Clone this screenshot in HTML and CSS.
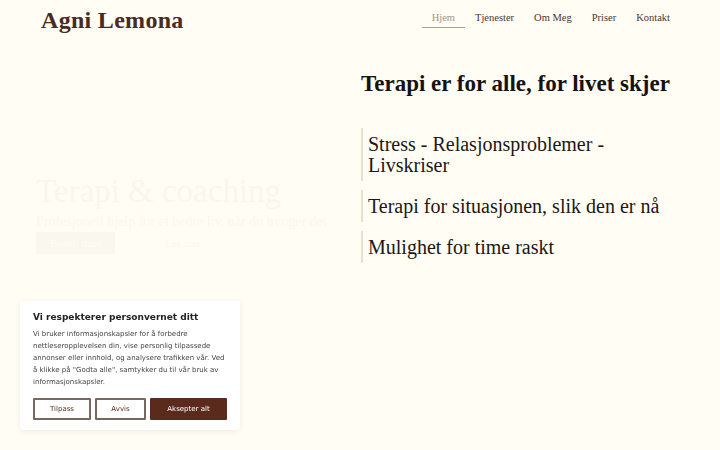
FILE: index.html
```html
<!DOCTYPE html>
<html lang="nb">
<head>
    <meta charset="utf-8">
    <title>Agni Lemona</title>
    <meta name="viewport" content="width=device-width, initial-scale=1">
    <link rel="stylesheet" href="styles.css">
</head>
<body>
    <header class="top">
        <div class="logo">Agni Lemona</div>
        <nav class="nav">
            <a class="on" href="#">Hjem</a>
            <a href="#">Tjenester</a>
            <a href="#">Om Meg</a>
            <a href="#">Priser</a>
            <a href="#">Kontakt</a>
        </nav>
    </header>

    <main class="hero">
        <section class="intro">
            <h1>Terapi &amp; coaching</h1>
            <p>Profesjonell hjelp for et bedre liv, når du trenger det</p>
            <div class="intro-b">
                <a class="fill" href="#">Bestill time</a>
                <a href="#">Les mer</a>
            </div>
        </section>

        <section class="points">
            <h2>Terapi er for alle, for livet skjer</h2>
            <ul>
                <li>Stress - Relasjonsproblemer - Livskriser</li>
                <li>Terapi for situasjonen, slik den er nå</li>
                <li>Mulighet for time raskt</li>
            </ul>
        </section>
    </main>

    <div class="cookie">
        <h3>Vi respekterer personvernet ditt</h3>
        <p>Vi bruker informasjonskapsler for å forbedre nettleseropplevelsen din, vise personlig tilpassede annonser eller innhold, og analysere trafikken vår. Ved å klikke på "Godta alle", samtykker du til vår bruk av informasjonskapsler.</p>
        <div class="cookie-b">
            <button class="ghost">Tilpass</button>
            <button class="ghost">Avvis</button>
            <button class="solid">Aksepter alt</button>
        </div>
    </div>
</body>
</html>
```

FILE: styles.css
```css
/* Farger */
:root {
    --bg: #fffdf4;
    --brun: #5a2b1d;
    --tekst: #4a3530;
    --kant: #eadfcb;
}

html, body {
    margin: 0;
    padding: 0;
    height: 100%;
    background-color: var(--bg);
    font-family: "Liberation Serif", serif;
}

/* Toppmeny */
.top {
    display: flex;
    justify-content: space-between;
    align-items: flex-start;
    padding: 0 40px 0 41px;
    height: 36px;
}

.logo {
    font-size: 24px;
    font-weight: bold;
    color: #4b2a21;
    letter-spacing: 0.3px;
    margin-top: 7px;
}

.nav {
    display: flex;
    margin-top: 12px;
}

.nav a {
    font-size: 10.5px;
    color: var(--tekst);
    text-decoration: none;
    padding: 0 10px 4px;
    border-bottom: 1px solid transparent;
}

.nav a.on {
    color: #a8937f;
    border-bottom-color: #b3a291;
}

/* Hovedinnhold */
.hero {
    display: grid;
    grid-template-columns: 325px 1fr;
    padding: 0 0 0 36px;
}

.intro {
    padding-top: 137px;
    opacity: 0.022;
}

.intro h1 {
    margin: 0;
    font-size: 33px;
    font-weight: normal;
    color: #222;
}

.intro p {
    margin: 4px 0 2px;
    font-size: 14px;
    color: #222;
}

.intro-b {
    display: flex;
    gap: 40px;
}

.intro-b a {
    font-size: 11px;
    padding: 5px 10px;
    color: #222;
    text-decoration: none;
}

.intro-b a.fill {
    background-color: var(--brun);
    color: #fff;
    padding: 5px 14px;
}

.points {
    padding-top: 35px;
}

.points h2 {
    margin: 0 0 31px;
    font-size: 23px;
    font-weight: bold;
    color: #161210;
}

.points ul {
    list-style: none;
    margin: 0;
    padding: 0;
    max-width: 305px;
}

.points li {
    border-left: 2px solid var(--kant);
    padding: 6px 0 5px 5px;
    margin-bottom: 9px;
    font-size: 20px;
    line-height: 21px;
    color: #1c1714;
}

/* Samtykkeboks */
.cookie {
    position: fixed;
    left: 20px;
    bottom: 20px;
    width: 194px;
    padding: 8px 13px 10px;
    background-color: #fff;
    box-shadow: 0 1px 6px rgba(0, 0, 0, 0.08);
    border-radius: 3px;
    font-family: "DejaVu Sans", sans-serif;
}

.cookie h3 {
    margin: 3px 0 6px;
    font-size: 9px;
    color: #222;
}

.cookie p {
    margin: 0 0 10px;
    font-size: 7px;
    line-height: 12px;
    color: #444;
}

.cookie-b {
    display: flex;
    gap: 4px;
}

.cookie-b button {
    height: 22px;
    font-family: "DejaVu Sans", sans-serif;
    font-size: 7px;
    border-radius: 1px;
    cursor: pointer;
}

.ghost {
    width: 58px;
    background-color: #fff;
    border: 2px solid #7a6760;
    color: #5a2b1d;
}

.ghost + .ghost {
    width: 51px;
}

.solid {
    flex: 1;
    background-color: var(--brun);
    border: 2px solid var(--brun);
    color: #fff;
}
```
